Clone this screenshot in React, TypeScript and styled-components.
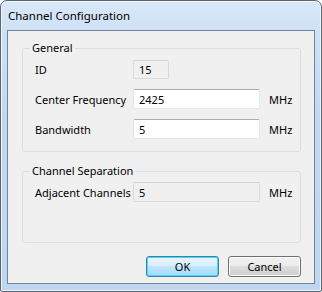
import styled, { createGlobalStyle } from "styled-components";

const GlobalStyle = createGlobalStyle`
	html, body {
		margin: 0;
		padding: 0;
		background: #ffffff;
	}
	body {
		font-family: "Noto Sans", "Open Sans", sans-serif;
		font-size: 11px;
		color: #000;
	}
`;

type RowType = {
	label: string;
	value: string;
	unit?: string;
	readOnly?: boolean;
	narrow?: boolean;
};

function FieldRow(props: RowType) {
	return (
		<Row>
			<Label>{props.label}</Label>
			<Field $readOnly={props.readOnly} $narrow={props.narrow}>
				{props.value}
			</Field>
			{props.unit && <Unit>{props.unit}</Unit>}
		</Row>
	);
}

export default function App() {
	return (
		<>
			<GlobalStyle />
			<Window>
				<TitleBar>Channel Configuration</TitleBar>
				<Client>
					<Group>
						<Legend>General</Legend>
						<FieldRow label="ID" value="15" readOnly narrow />
						<FieldRow label="Center Frequency" value="2425" unit="MHz" />
						<FieldRow label="Bandwidth" value="5" unit="MHz" />
					</Group>
					<Group $tall>
						<Legend>Channel Separation</Legend>
						<FieldRow label="Adjacent Channels" value="5" unit="MHz" readOnly />
					</Group>
					<ButtonBar>
						<Button $primary>OK</Button>
						<Button>Cancel</Button>
					</ButtonBar>
				</Client>
			</Window>
		</>
	);
}

const Window = styled.div`
	width: 322px;
	height: 292px;
	box-sizing: border-box;
	border: 1px solid #5b6573;
	border-radius: 7px 7px 2px 2px;
	background: linear-gradient(180deg, #d9e8f8 0%, #cde0f5 12%, #c3d9f1 40%, #bfd6f0 100%);
	display: flex;
	flex-direction: column;
	padding: 0 6px 7px 6px;
	box-shadow: inset 0 0 0 1px rgba(255, 255, 255, 0.7);
`;

const TitleBar = styled.div`
	height: 29px;
	display: flex;
	align-items: center;
	padding-left: 1px;
	box-sizing: border-box;
	font-size: 11.5px;
	color: #000;
`;

const Client = styled.div`
	flex: 1;
	background: #f0f0f0;
	border: 1px solid #72839a;
	display: flex;
	flex-direction: column;
	padding: 10px 13px 0 14px;
`;

const Group = styled.fieldset<{ $tall?: boolean }>`
	margin: 0 0 ${(p) => (p.$tall ? "0" : "12px")} 0;
	padding: 4px 0 ${(p) => (p.$tall ? "40px" : "12px")} 12px;
	border: 1px solid #d5dfe5;
	border-radius: 3px;
	display: flex;
	flex-direction: column;
	gap: 10px;
	min-width: 0;
`;

const Legend = styled.legend`
	padding: 0 2px;
	margin-left: -5px;
	font-size: 11px;
	line-height: 14px;
`;

const Row = styled.div`
	display: flex;
	align-items: center;
	height: 20px;
`;

const Label = styled.div`
	width: 98px;
	white-space: nowrap;
`;

const Field = styled.div<{ $readOnly?: boolean; $narrow?: boolean }>`
	box-sizing: border-box;
	width: ${(p) => (p.$narrow ? "36px" : "127px")};
	height: ${(p) => (p.$narrow ? "19px" : "20px")};
	display: flex;
	align-items: center;
	padding-left: 5px;
	background: ${(p) => (p.$readOnly ? "#f0f0f0" : "#ffffff")};
	border: 1px solid ${(p) => (p.$readOnly ? "#dadada" : "#e2e8ee")};
	border-top-color: ${(p) => (p.$readOnly ? "#d4d4d4" : "#abadb3")};
	border-radius: 2px;
`;

const Unit = styled.div`
	margin-left: 9px;
`;

const ButtonBar = styled.div`
	display: flex;
	justify-content: flex-end;
	gap: 9px;
	margin-top: 13px;
`;

const Button = styled.div<{ $primary?: boolean }>`
	box-sizing: border-box;
	width: 73px;
	height: 21px;
	display: flex;
	align-items: center;
	justify-content: center;
	border-radius: 3px;
	border: 1px solid ${(p) => (p.$primary ? "#3c7fb1" : "#707070")};
	background: ${(p) =>
		p.$primary
			? "linear-gradient(180deg, #eaf6fd 0%, #d9f0fc 45%, #bee6fd 50%, #a7d9f5 100%)"
			: "linear-gradient(180deg, #f2f2f2 0%, #ebebeb 45%, #dddddd 50%, #cfcfcf 100%)"};
	box-shadow: ${(p) =>
		p.$primary ? "inset 0 0 0 1px #48d8fb" : "inset 0 0 0 1px #fcfcfc"};
`;
